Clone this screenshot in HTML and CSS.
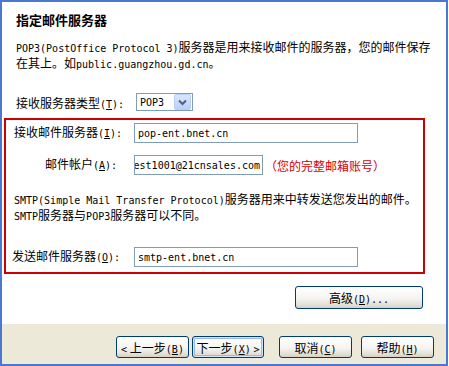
FILE: index.html
```html
<!DOCTYPE html>
<html>
<head>
    <meta charset="utf-8">
    <link rel="stylesheet" href="styles.css">
</head>
<body>
    <div class="window">
        <div class="page">
            <h1 class="title">指定邮件服务器</h1>
            <p class="intro"><span class="m">POP3(PostOffice Protocol 3)</span>服务器是用来接收邮件的服务器，您的邮件保存在其上。如<span class="m">public.guangzhou.gd.cn</span>。</p>

            <div class="row type-row">
                <span class="label">接收服务器类型<span class="m">(<u>T</u>):</span></span>
                <div class="combo">
                    <span class="m">POP3</span>
                    <span class="drop">
                        <svg width="9" height="7" viewBox="0 0 9 7"><path d="M1 1.5 L4.5 5 L8 1.5" fill="none" stroke="#4d6185" stroke-width="2"/></svg>
                    </span>
                </div>
            </div>

            <div class="servers">
                <div class="row">
                    <span class="label">接收邮件服务器<span class="m">(<u>I</u>):</span></span>
                    <div class="field long"><span class="m">pop-ent.bnet.cn</span></div>
                </div>
                <div class="row">
                    <span class="label indent">邮件帐户<span class="m">(<u>A</u>):</span></span>
                    <div class="field short"><span class="m">est1001@21cnsales.com</span><i class="caret"></i></div>
                    <span class="note">（您的完整邮箱账号）</span>
                </div>
                <p class="smtp"><span class="m">SMTP(Simple Mail Transfer Protocol)</span>服务器用来中转发送您发出的邮件。<br><span class="m">SMTP</span>服务器与<span class="m">POP3</span>服务器可以不同。</p>
                <div class="row">
                    <span class="label out">发送邮件服务器<span class="m">(<u>O</u>):</span></span>
                    <div class="field long"><span class="m">smtp-ent.bnet.cn</span></div>
                </div>
            </div>

            <div class="advanced">
                <button class="btn wide">高级<span class="m">(<u>D</u>)...</span></button>
            </div>
        </div>

        <div class="footer">
            <button class="btn"><span class="m">&lt;</span> 上一步<span class="m">(<u>B</u>)</span></button>
            <button class="btn default">下一步<span class="m">(<u>X</u>)</span> <span class="m">&gt;</span></button>
            <button class="btn cancel">取消<span class="m">(<u>C</u>)</span></button>
            <button class="btn help">帮助<span class="m">(<u>H</u>)</span></button>
        </div>
    </div>
</body>
</html>
```

FILE: styles.css
```css
body {
    margin: 0; background: #fff; color: #000;
    font-family: "Noto Sans CJK SC", sans-serif; font-size: 12px;
}
.m { font-family: "DejaVu Sans Mono", monospace; font-size: 10px }
u { text-underline-offset: 1px }

.window {
    width: 448px; height: 366px; box-sizing: border-box;
    border: 2px solid #4a78cf;
    display: flex; flex-direction: column;
}
.page { flex: 1; background: #fff; padding: 0 21px 0 2px }

.title {
    margin: 11px 0 0 12px; font-size: 13px; line-height: 14px; font-weight: bold;
}
.intro { margin: 13px 0 0 12px; width: 424px; line-height: 14px }

.row { display: flex; align-items: center; height: 20px }
.label { width: 120px; flex: none; line-height: 14px }
.label.indent { width: 89px; padding-left: 31px }
.label.out { width: 122px; margin-left: -2px }

.type-row { margin: 21px 0 0 12px; height: 18px }
.type-row .label { margin-top: 4px }
.combo {
    width: 57px; height: 18px; box-sizing: border-box;
    border: 1px solid #7f9db9; background: #fff;
    display: flex; align-items: center; justify-content: space-between;
    padding: 0 1px 0 3px;
}
.drop {
    width: 15px; height: 14px; border: 1px solid #b9cdf7; border-radius: 2px;
    background: linear-gradient(#dbe6fd, #bccffa);
    display: flex; align-items: center; justify-content: center;
}

.servers {
    margin-top: 7px; border: 2px solid #cc0000;
    padding: 3px 0 5px 8px;
}
.servers .row + .row { margin-top: 12px }
.field {
    height: 20px; box-sizing: border-box; border: 1px solid #7f9db9;
    display: flex; align-items: center; padding-left: 3px;
    white-space: nowrap; overflow: hidden;
}
.field.long { width: 224px }
.field.short { width: 129px; justify-content: flex-end; padding: 0 2px 0 0 }
.caret { width: 1px; height: 13px; background: #000 }
.note { color: #d40000; margin-left: 2px }
.smtp { margin: 17px 0 23px 0; line-height: 14px }

.advanced { display: flex; justify-content: flex-end; margin: 12px 2px 0 0 }

.btn {
    height: 22px; width: 73px; padding: 0;
    font: 12px "Noto Sans CJK SC", sans-serif; color: #000;
    border: 1px solid #003c74; border-radius: 3px;
    background: linear-gradient(#fff, #f5f4f0 55%, #e3e0d6 85%, #d6d0c5);
}
.btn.wide { width: 128px; height: 23px }
.btn.default { width: 72px; margin-left: 3px; box-shadow: inset 0 0 0 1px #cee7ff, inset 0 0 0 2px #98b8ea }
.btn.cancel { margin-left: 15px }
.btn.help { margin-left: 9px }

.footer {
    height: 40px; background: #ece9d8; box-sizing: border-box;
    display: flex; align-items: flex-start;
    padding: 12px 0 0 114px;
}
```
